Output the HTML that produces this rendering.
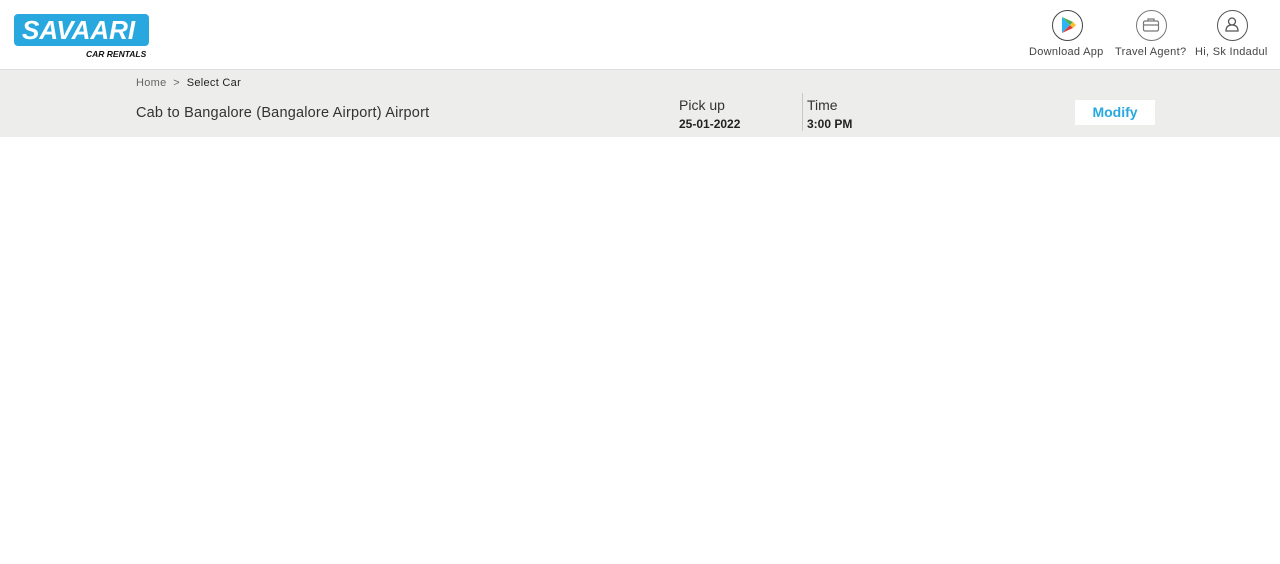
<!DOCTYPE html>
<html><head><style>
*{margin:0;padding:0;box-sizing:border-box}
body{width:1280px;height:564px;background:#fff;font-family:"Liberation Sans",sans-serif;position:relative;overflow:hidden;color:#222}
.abs{position:absolute;white-space:nowrap}
.bar{position:absolute;left:0;top:69px;width:1280px;height:68px;background:#ededeb;border-top:1px solid #ddd}
.lbl{font-size:11px;color:#444;letter-spacing:0.3px}
.ic{position:absolute;width:31px;height:31px;border-radius:50%;border:1.5px solid #444;background:#fff}
</style></head><body>
<div class="abs" style="left:14px;top:14px;width:135px;height:32px;background:#29a8df;border-radius:4px"></div>
<div class="abs" style="left:22px;top:15px;font-size:26px;font-weight:bold;font-style:italic;color:#fff">SAVAARI</div>
<div class="abs" style="left:86px;top:49px;font-size:8.5px;font-weight:bold;font-style:italic;color:#111">CAR RENTALS</div>

<div class="ic" style="left:1052px;top:10px"><svg width="28" height="28" viewBox="0 0 28 28" style="position:absolute;left:0;top:0"><path d="M9 6 L9 22 L17 14 Z" fill="#29b6f6"/><path d="M9 6 L17 14 L20 11 Z" fill="#4caf50"/><path d="M9 22 L17 14 L20 17 Z" fill="#e53935"/><path d="M20 11 L23 14 L20 17 L17 14Z" fill="#fbc02d"/></svg></div>
<div class="ic" style="left:1136px;top:10px;border-color:#777"><svg width="28" height="28" viewBox="0 0 28 28" style="position:absolute;left:0;top:0"><rect x="6.5" y="10" width="15" height="10" rx="1.5" fill="none" stroke="#777" stroke-width="1.2"/><path d="M11 10 V8 H17 V10 M6.5 14 H21.5" fill="none" stroke="#777" stroke-width="1.2"/></svg></div>
<div class="ic" style="left:1217px;top:10px;border-color:#555"><svg width="28" height="28" viewBox="0 0 28 28" style="position:absolute;left:0;top:0"><circle cx="14" cy="10.5" r="3.5" fill="none" stroke="#555" stroke-width="1.3"/><path d="M8 20 Q8 14 14 14 Q20 14 20 20 Z" fill="none" stroke="#555" stroke-width="1.3"/></svg></div>
<div class="abs lbl" style="left:1029px;top:46px">Download App</div>
<div class="abs lbl" style="left:1115px;top:46px">Travel Agent?</div>
<div class="abs lbl" style="left:1195px;top:46px">Hi, Sk Indadul</div>

<div class="bar"></div>
<div class="abs" style="left:136px;top:77px;font-size:11px;color:#666;letter-spacing:0.3px">Home &nbsp;&gt;&nbsp; <span style="color:#222">Select Car</span></div>
<div class="abs" style="left:136px;top:105px;font-size:14.5px;color:#333;letter-spacing:0.2px">Cab to Bangalore (Bangalore Airport) Airport</div>
<div class="abs" style="left:679px;top:97px;font-size:14px;color:#333">Pick up</div>
<div class="abs" style="left:679px;top:117px;font-size:12px;font-weight:bold;color:#222">25-01-2022</div>
<div class="abs" style="left:802px;top:93px;width:1px;height:38px;background:#c8c8c8"></div>
<div class="abs" style="left:807px;top:97px;font-size:14px;color:#333">Time</div>
<div class="abs" style="left:807px;top:117px;font-size:12px;font-weight:bold;color:#222">3:00 PM</div>
<div class="abs" style="left:1075px;top:100px;width:80px;height:25px;background:#fff;color:#29a8df;font-weight:bold;font-size:14px;text-align:center;line-height:25px">Modify</div>
</body></html>
